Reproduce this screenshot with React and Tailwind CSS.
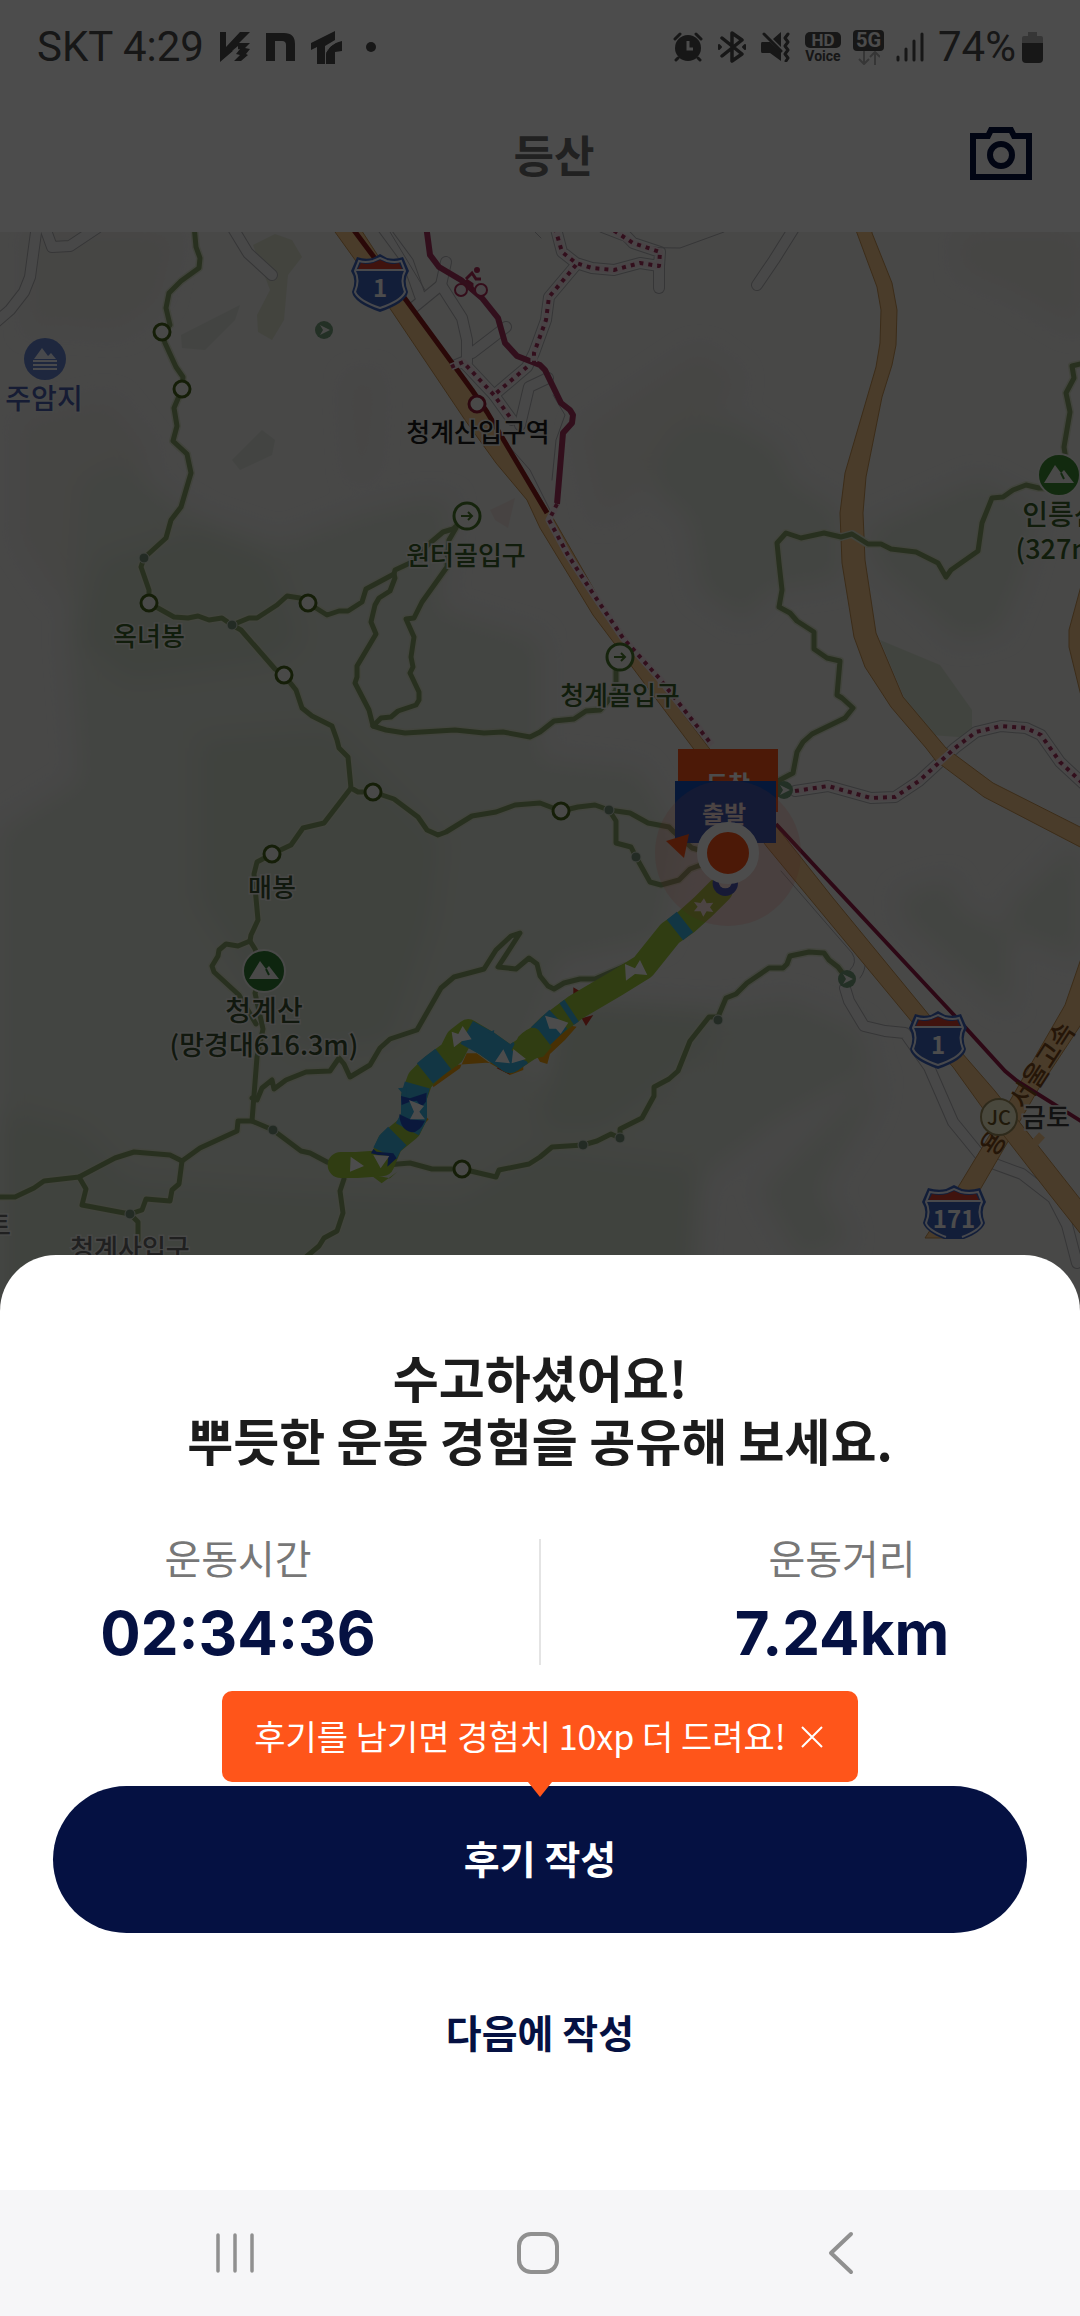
const TRAILS = [
  "194,225 196,247 200,258 199,268 181,281 169,293 166,308 170,325 162,332 165,343 176,367 183,377 182,389 174,408 177,426 173,441 187,454 191,473 181,507 171,520 166,538 144,558 141,567 149,590 149,603 174,617 188,618 198,616 209,620 222,618 232,625 249,618 257,618 277,605 287,596 300,598 308,603 327,615 339,611 348,611 362,602 366,589 394,574 395,570 410,563 430,543 443,532 453,529 467,516",
  "394,574 395,578 390,591 379,598 375,605 371,622 376,634 357,666 357,677 355,683 369,710 373,726",
  "456,528 449,540 447,567 422,602 414,618 406,619 414,637 411,657 413,667 410,673 419,692 419,700 416,705 398,711 391,717 381,718 373,726 386,730 405,733 455,730 484,733 503,732 530,737 540,732 554,721 574,719 586,711 600,710 607,702 616,690 616,670",
  "232,625 241,630 275,669 284,675 296,690 302,708 312,716 332,726 337,740 339,748 348,757 351,788 358,792 373,792 394,799 418,817 427,830 438,835 446,832 472,816 496,812 515,805 540,803 561,811 578,807 595,805 609,810 630,813 648,823 669,827 674,832 692,848 710,853",
  "609,810 616,821 616,843 631,847 636,857 650,882 661,885 679,880 690,869 698,866 715,862",
  "351,788 324,823 303,828 291,845 272,854 257,862 254,874 256,898 258,920 251,935 250,941 255,949 264,971 255,993 263,1029 257,1057 252,1121 238,1121 237,1131 200,1148 182,1161 170,1155 134,1152 115,1158 79,1177 44,1181 34,1188 15,1197 -4,1197",
  "250,941 238,946 226,944 219,950 218,956 212,966 214,972 239,995 256,1024",
  "79,1177 86,1189 82,1205 119,1212 130,1214 142,1210 146,1199 170,1201 172,1190 179,1184 182,1161",
  "130,1214 138,1222 138,1240",
  "252,1121 273,1130 301,1151 310,1153 327,1162 345,1166",
  "252,1098 257,1100 262,1088 272,1080 274,1089 286,1080 306,1072 330,1071 339,1058 344,1064 350,1077 370,1065 380,1048 390,1039 417,1030 441,988 454,977 484,969 496,950 511,936 520,933 511,947 498,967 516,969 529,958 537,964 540,976 548,986 554,989 564,983 580,979 595,979 611,972 625,966",
  "380,1166 398,1164 410,1163 432,1169 462,1169 496,1177 499,1170 529,1164 540,1157 552,1147 583,1145 597,1141 611,1134 620,1138 620,1129 642,1118 654,1096 654,1087 669,1079 678,1071 690,1041 709,1017 718,1017 726,998 736,994 747,983 769,968 783,968 787,964 790,956 809,952 824,953 829,960 838,967 847,979",
  "344,1170 344,1179 340,1191 343,1213 337,1231 324,1238 319,1246 300,1262",
  "1084,363 1072,366 1074,378 1066,393 1070,412 1064,447 1066,460",
  "1059,488 1039,488 1026,485 1013,490 1003,497 992,498 982,523 978,551 951,570 946,577 938,563 916,552 891,549 881,544 868,544 852,534 841,537 824,533 801,538 786,533 777,543 779,563 782,590 779,607 790,613 797,621 814,632 814,649 827,658 840,661 837,695 842,698 853,708 845,718 812,734 803,742 797,752 793,773 778,781",
]

const LANES = [
  "37,225 30,277 24,292 10,310 -4,322",
  "44,225 52,247 70,246 97,228",
  "231,225 248,253 272,275",
  "383,228 408,262 420,296",
  "408,312 441,285 462,318 467,340 467,362",
  "441,285 446,262",
  "472,353 506,327",
  "520,425 529,387 548,378",
  "796,225 774,260 757,285",
  "659,262 659,288",
  "555,225 562,252 576,263 592,268 614,270 640,263 659,266 660,252 633,243 616,225",
  "576,265 549,297 546,320 534,353 527,367 494,395",
  "451,367 463,362 494,395 512,420",
  "845,988 849,1001 864,1026 885,1031 905,1033 929,1067 953,1122 984,1160 1022,1174 1053,1198 1067,1225 1077,1263",
  "795,791 828,786 871,798 895,797 919,781 955,748 976,732 1001,726 1026,728 1041,735 1060,762 1090,790",
]

const DOTTED = [
  "557,504 549,520 568,555 592,592 623,638 659,678 712,745",
  "555,228 562,252 576,263 592,268 614,270 640,263 659,266 660,252 633,243 610,228",
  "576,265 549,297 546,320 534,353 534,362",
  "527,367 494,395",
  "451,367 463,362 494,395 512,420",
  "795,791 828,786 871,798 895,797 919,781 955,748 976,732 1001,726 1026,728 1041,735 1060,762 1090,790",
]

const RINGS = [[162, 332], [182, 389], [149, 603], [308, 603], [284, 675], [373, 792], [272, 854], [561, 811], [462, 1169]]
const DOTS = [[144, 558], [232, 625], [609, 810], [636, 857], [273, 1130], [130, 1214], [583, 1145], [620, 1138], [718, 1020]]
const GATES = [[324, 330], [784, 790], [847, 979]]

const LABELS = [
  { x: 44, y: 409, size: 28, fill: "#4a5fae", text: "주암지" },
  { x: 478, y: 442, size: 26, fill: "#1c1c1c", text: "청계산입구역" },
  { x: 466, y: 565, size: 26, fill: "#3a6228", text: "원터골입구" },
  { x: 149, y: 646, size: 26, fill: "#3a6228", text: "옥녀봉" },
  { x: 620, y: 705, size: 26, fill: "#3a6228", text: "청계골입구" },
  { x: 1061, y: 525, size: 28, fill: "#3a6228", text: "인릉산" },
  { x: 1061, y: 559, size: 27, fill: "#3a6228", text: "(327m)" },
  { x: 272, y: 897, size: 26, fill: "#3a5030", text: "매봉" },
  { x: 264, y: 1021, size: 28, fill: "#3a5030", text: "청계산" },
  { x: 264, y: 1055, size: 27, fill: "#3a5030", text: "(망경대616.3m)" },
  { x: 130, y: 1258, size: 26, fill: "#6b6b6b", text: "청계사입구" },
  { x: -1, y: 1235, size: 26, fill: "#6b6b6b", text: "트" },
  { x: 1046, y: 1127, size: 26, fill: "#3c3c3c", text: "금토" },
]

function Shield({ x, y, label }) {
  return (
    <g transform={`translate(${x - 29} ${y - 29})`}>
      <path d="M29 0 36 4Q44 6 52 3L58 17Q52 26 57 38 55 49 29 58 3 49 1 38 6 26 0 17L6 3Q14 6 22 4Z" fill="#3f66c0" />
      <path d="M29 4 36 7Q44 9 50 7L54 17Q49 26 54 38 50 47 29 54 8 47 4 38 9 26 4 17L8 7Q14 9 22 7Z" fill="#3f66c0" stroke="#f0f3ff" strokeWidth="2" />
      <path d="M7 15 10 9Q16 11 22 9L29 6 36 9Q42 11 48 9L51 15Z" fill="#d8402f" />
      <path d="M5 16H53" stroke="#f0f3ff" strokeWidth="2" />
      <text x="29" y="43" textAnchor="middle" fontSize="24" fontWeight="700" fill="#fff">{label}</text>
    </g>
  )
}

// three-digit route numbers use the wider shield
function WideShield({ x, y, label }) {
  return (
    <g transform={`translate(${x - 32} ${y - 28})`}>
      <path d="M32 0 40 4Q48 6 58 3L64 17Q58 26 63 38 60 47 42 54H22Q4 47 1 38 6 26 0 17L6 3Q16 6 24 4Z" fill="#3f66c0" />
      <path d="M24 52Q6 45 4 38 9 26 4 17L8 7Q17 9 25 7L32 4 39 7Q47 9 56 7L60 17Q55 26 60 38 58 45 40 52" fill="none" stroke="#f0f3ff" strokeWidth="2" />
      <path d="M7 15 10 9Q18 11 25 9L32 6 39 9Q46 11 54 9L57 15Z" fill="#d8402f" />
      <path d="M5 16H59" stroke="#f0f3ff" strokeWidth="2" />
      <text x="32" y="43" textAnchor="middle" fontSize="24" fontWeight="700" fill="#fff">{label}</text>
    </g>
  )
}

function Peak({ x, y, fill }) {
  return (
    <g transform={`translate(${x} ${y})`}>
      <circle r="21" fill={fill} stroke="#f4f4f0" strokeWidth="2" />
      <path d="M-15 8-4-10 2-2 5-5 15 8Z" fill="#f4f4f0" />
      <path d="M2-2 5 4" stroke={fill} strokeWidth="2" />
    </g>
  )
}

function TrailHead({ x, y }) {
  return (
    <g transform={`translate(${x} ${y})`} stroke="#4a7a2c" fill="none">
      <circle r="13" fill="#f4f4f0" strokeWidth="3" />
      <path d="M-6 0H5M1-4 5 0 1 4" strokeWidth="2" />
    </g>
  )
}

function Terrain() {
  return (
    <g>
      <defs>
        <filter id="relief" x="-10%" y="-10%" width="120%" height="120%">
          <feGaussianBlur stdDeviation="12" />
        </filter>
      </defs>
      <path d="M0 232H1080V1320H0Z" fill="#f0f0ee" />
      <g filter="url(#relief)">
        <g fill="#ebe9e3">
          <path d="M30 232H175L160 300 120 330 60 325 30 330Z" />
          <path d="M20 420 110 400 150 450 130 560 60 600 20 540Z" />
          <path d="M350 380 375 375 370 470 355 480Z" />
          <path d="M580 430 700 350 740 380 690 450 600 520Z" />
          <path d="M960 232H1080V330L1010 290 960 270Z" />
        </g>
        <g fill="#e0e6dc">
          <path d="M655 460 680 425 730 420 780 450 790 480 840 510 840 580 770 590 745 620 700 590 690 520 655 490Z" />
          <path d="M80 480 120 460 170 500 205 520 280 545 360 515 420 500 450 500 440 610 540 640 540 760 640 770 680 840 660 940 560 960 520 1060 560 1100 690 1080 720 1010 790 1000 860 1030 870 1070 780 1120 700 1180 650 1260 0 1320 0 830 80 780 70 640Z" />
          <path d="M865 530 980 480 1040 510 1020 580 1000 630 960 640 915 600 880 570Z" />
          <path d="M900 895 950 880 960 910 1080 960 1080 840 1010 905 1010 1010 950 960 905 920Z" />
          <path d="M820 1130 860 1090 878 1075 870 1110 820 1190 850 1240 800 1260 760 1190Z" />
        </g>
        <g fill="#d6dfd0">
          <path d="M100 560 200 530 270 560 300 640 270 660 130 680 80 640Z" />
          <path d="M200 740 330 730 440 840 430 920 390 1040 300 1050 200 900Z" />
          <path d="M0 1110 80 1130 130 1180 260 1190 460 1200 540 1150 700 1170 690 1320H0Z" />
          <path d="M560 1000 720 1010 700 1060 600 1130 540 1130Z" />
        </g>
      </g>
      <path d="M253 245 275 234 292 240 302 257 288 275 284 320 272 340 258 332 257 315 270 290Z" fill="#e0e4d0" />
      <g fill="#e0e5dc">
        <path d="M181 335 240 305 235 320 205 350 182 348Z" />
        <path d="M232 460 262 430 275 440 272 455 240 470Z" />
      </g>
      <path d="M880 640 940 665 972 710 972 738 930 735 905 700Z" fill="#dbe5d3" />
      <path d="M490 510 515 498 508 528 495 520Z" fill="#eee2dc" />
    </g>
  )
}

function Route() {
  return (
    <g transform="translate(310 850) scale(0.3333)">
      <g fill="#f0a010">
        <path d="M370 712 450 655 470 610 500 610 540 640 600 675 640 660 640 630 360 650Z" />
        <path d="M690 635 712 642 720 612 765 570 800 530 740 520 670 600Z" />
        <path d="M335 790 356 808 335 830Z" />
      </g>
      <path d="M790 412 820 430 790 440ZM850 495 828 528 815 505ZM560 655 600 674 580 640Z" fill="#c8382a" />
      <g fill="none" strokeWidth="78" strokeLinejoin="round">
        <path d="M92 945H140L215 940 240 880 295 835 312 800V740L330 690 370 650 425 610 445 570 475 547 530 580 600 630 660 590 720 530 800 470 920 400 1000 350 1080 250 1130 215 1180 170 1230 120" stroke="#a0cc3c" strokeLinecap="round" />
        <g stroke="#3cb4e4">
          <path d="M225 910 240 880 262 858M292 838 312 800V740L322 705M345 670 370 650 400 627M470 547 530 580 600 630 632 608M690 560 745 508M770 492 785 482M1095 240 1125 216" />
        </g>
      </g>
      <path d="M415 560 470 600 440 650 400 600Z" fill="#a0cc3c" />
      <path d="M264 715 290 712 290 745ZM535 548 553 540 550 555Z" fill="#3cb4e4" />
      <path d="M625 560Q670 515 690 545L725 590 700 620 645 632 605 600Z" fill="#a0cc3c" />
      <g fill="#2252c8">
        <path d="M273 738 300 745 350 728 348 755 335 770 320 752 300 755 275 765Z" />
        <path d="M268 793 300 808 345 812Q330 846 305 847 270 840 268 793Z" />
        <path d="M183 910 190 897 200 905 250 910 260 925 232 950 235 918 205 915Z" />
        <circle cx="1246" cy="100" r="38" />
      </g>
      <path d="M175 970 215 1000 262 965 240 985 190 975Z" fill="#a0cc3c" />
      <g fill="#fff">
        <path d="M122 920 162 948 120 965ZM190 915 238 918 212 955ZM297 750 342 768 328 785 345 808H300L312 785Z" />
        <path d="M425 545 445 552 458 528 485 568 455 574 432 592ZM580 598 600 640 555 635ZM610 597 648 627 605 640Z" />
        <path d="M705 497 745 508 775 518 752 552 738 536 718 536ZM945 342 975 355 990 330 1012 375 975 372 948 392Z" />
        <path d="M1182 145 1190 160 1210 158 1200 172 1210 186 1190 184 1180 200 1172 184 1152 184 1163 170 1152 156 1172 159Z" />
        <circle cx="1246" cy="95" r="20" />
      </g>
    </g>
  )
}

function TrailMap() {
  return (
    <svg
      viewBox="0 232 1080 1083"
      preserveAspectRatio="xMidYMin slice"
      className="block h-[1083px] w-full grow font-['Noto_Sans_CJK_KR',sans-serif]"
      role="img"
      aria-label="등산 경로 지도"
    >
      <Terrain />

      <g fill="none" strokeLinejoin="round" strokeLinecap="round">
        {LANES.map((d) => <polyline key={d} points={d} stroke="#b4b4b8" strokeWidth="12" />)}
        {LANES.map((d) => <polyline key={d} points={d} stroke="#f2f2f0" strokeWidth="10" />)}
        <path d="M781 871 852 953Q858 962 850 970M860 978Q866 970 865 962M600 232Q640 250 680 248L724 232M553 395 565 415 556 440 552 480M535 232 541 238M390 232 425 290M398 320 530 470 550 510" stroke="#b4b4b8" strokeWidth="1" />
      </g>

      <g fill="#f7c88c" stroke="#c89452" strokeWidth="1">
        <path d="M854 225 877 287 881 310 880 343 876 367 845 473 840 513 842 563 854 637 865 667 891 707 926 748 936 761 984 797 1084 849V829L993 783 958 757 946 748 903 697 876 633 865 560 863 513 866 477 882 397 892 365 896 345 897 310 892 283 872 233V225Z" />
        <path d="M1084 575 1069 630V647L1084 708Z" />
        <path d="M1084 950 1065 1005 1000 1118 960 1184 925 1238H953L981 1188 1039 1088 1084 1020Z" />
        <path d="M330 225 389 307 465 420 496 463 527 500 540 528 593 615 693 748 767 847 912 1022 953 1067 984 1110 1050 1195 1084 1238V1204L995 1091 929 1015 833 898 776 826 709 748 632 646 600 600 553 518 487 413 410 305 358 225Z" />
        <path d="M1010 1128 1030 1148 1042 1135" fill="none" stroke="#f7c88c" strokeWidth="8" />
      </g>

      <g fill="none" strokeLinejoin="round">
        <path d="M350 225 406 300 472 390 487 412 547 513" stroke="#8c1c1c" strokeWidth="5" />
        <path d="M776 824 826 878 953 1014 1005 1071 1017 1081 1084 1123" stroke="#981c48" strokeWidth="4" />
        <polyline points="426,225 430,255 439,267 461,280 482,298 498,318 505,343 517,356 540,365 545,370 561,403 570,410 573,415 572,423 563,433 557,504" stroke="#a83460" strokeWidth="6" />
        {DOTTED.map((d) => <polyline key={d} points={d} stroke="#f6e4ec" strokeWidth="7" />)}
        {DOTTED.map((d) => <polyline key={d} points={d} stroke="#a83460" strokeWidth="4" strokeDasharray="4 5" />)}
      </g>

      <g fill="none" strokeLinejoin="round" strokeLinecap="round">
        {TRAILS.map((d) => <polyline key={d} points={d} stroke="#dce4cc" strokeWidth="8" />)}
        {TRAILS.map((d) => <polyline key={d} points={d} stroke="#88a06a" strokeWidth="5" />)}
      </g>

      {RINGS.map(([x, y]) => <circle key={`${x}-${y}`} cx={x} cy={y} r="8" fill="#f4f4f0" stroke="#46661c" strokeWidth="3" />)}
      {DOTS.map(([x, y]) => <circle key={`${x}-${y}`} cx={x} cy={y} r="5" fill="#76927a" stroke="#d8e0d4" strokeWidth="1" />)}
      {GATES.map(([x, y]) => (
        <g key={`${x}-${y}`} transform={`translate(${x} ${y})`}>
          <circle r="9" fill="#76a07c" />
          <path d="M-4-5 6 0-4 5-1 0Z" fill="#f4f4f0" />
        </g>
      ))}
      <circle cx="477" cy="404" r="8" fill="#f4f4f0" stroke="#981c38" strokeWidth="3" />

      <g transform="translate(471 280)" fill="none" stroke="#b02c58" strokeWidth="2">
        <circle cx="-10" cy="10" r="6" fill="#f2e4ea" />
        <circle cx="10" cy="10" r="6" fill="#f2e4ea" />
        <path d="M-5-1 1-7 5-1 10-1M-5 0 1 4V12" strokeWidth="3" />
        <circle cx="6" cy="-10" r="2" fill="#b02c58" />
      </g>

      <Shield x={380} y={283} label="1" />
      <Shield x={938} y={1040} label="1" />
      <WideShield x={954} y={1213} label="171" />

      <g transform="translate(45 359)">
        <circle r="21" fill="#6684d0" />
        <path d="M-11 0-3-11 3-3 6-6 11 0Z" fill="#f0f3ff" />
        <path d="M-12 2H12M-12 6H12M-12 10H12" stroke="#f0f3ff" strokeWidth="2" />
      </g>
      <Peak x={1059} y={475} fill="#3f8c34" />
      <Peak x={264} y={971} fill="#2f7c34" />
      <TrailHead x={467} y={516} />
      <TrailHead x={620} y={657} />

      <g fontWeight="500" textAnchor="middle">
        <text transform="translate(1050 1070) rotate(-57)" fontSize="26" fill="#7c4a1c">서울고속</text>
        <text transform="translate(1001 1148) rotate(-57)" fontSize="26" fill="#7c4a1c">용</text>
        {LABELS.map((l) => (
          <text key={l.text} x={l.x} y={l.y} fontSize={l.size} fill={l.fill} stroke="#f0f2ee" strokeWidth="3" paintOrder="stroke">{l.text}</text>
        ))}
      </g>
      <circle cx="999" cy="1117" r="18" fill="#f4f0cc" stroke="#9c8c5c" strokeWidth="2" />
      <text x="999" y="1125" textAnchor="middle" fontSize="20" fontWeight="500" fill="#6c5424">JC</text>

      <Route />

      {/* start / finish flags and the current position */}
      <g textAnchor="middle" fontSize="24" fontWeight="700" fill="#fff">
        <path d="M678 749H778V812H678Z" fill="#ff5519" />
        <text x="728" y="793">도착</text>
        <path d="M675 781H776V843H675Z" fill="#1450c0" />
        <text x="724" y="823">출발</text>
      </g>
      <circle cx="728" cy="853" r="73" fill="#ff7a6a" fillOpacity="0.2" />
      <path d="M666 841 689 834 684 858Z" fill="#ff5519" />
      <circle cx="728" cy="853" r="26" fill="#ff5519" stroke="#fff" strokeWidth="10" />
    </svg>
  )
}

function StatusBar() {
  return (
    <div className="flex h-[94px] items-center justify-between px-[37px] font-[Roboto,sans-serif] text-[42px] leading-none text-[#4d4d4d]">
      <div className="flex items-center">
        <span className="mr-4">SKT 4:29</span>
        <svg className="mr-4 h-[30px] w-[30px]" viewBox="0 0 30 30" fill="currentColor">
          <path d="M0 0H6V15L20 0H30L19 11H30L25 16 30 17 26 22 28 23 21 29H14L20 23 16 22 20 17 14 18 0 30Z" />
          <path d="M12 19 18 14 18 18Z" fill="#fff" />
        </svg>
        <svg className="mr-4 h-7 w-[29px]" viewBox="0 0 29 28" fill="currentColor">
          <path d="M0 0H18Q29 0 29 11V28H20V12Q20 8 16 8H9V28H0Z" />
        </svg>
        <svg className="mr-6 h-[33px] w-[31px]" viewBox="0 0 31 33" fill="currentColor">
          <path d="M0 12 24 0V9L14 15V33H6V16L0 19Z" />
          <path d="M31 10V20L24 21V33H15V23Q16 14 31 10Z" />
          <path d="M14.500 15V33M15 21Q18 15 25 11" fill="none" stroke="#fff" strokeWidth="1" />
        </svg>
        <span className="h-2.5 w-2.5 rounded-full bg-current" />
      </div>

      <div className="flex items-center">
        <svg className="mr-3.5 h-[30px] w-[30px]" viewBox="0 0 30 30" fill="none" stroke="currentColor" strokeWidth="4" strokeLinecap="round">
          <circle cx="15" cy="16" r="13" fill="currentColor" stroke="none" />
          <path d="M2 7 7 2M28 7 23 2M5 26 3 28M25 26 27 28" strokeWidth="3" />
          <path d="M15 9V17H20" stroke="#fff" strokeWidth="3" strokeLinecap="butt" />
        </svg>
        <svg className="mr-3.5 h-[32px] w-[30px]" viewBox="0 0 30 32" fill="none" stroke="currentColor" strokeWidth="3.500" strokeLinejoin="round" strokeLinecap="round">
          <path d="M5 7 25 23 15 30V2L25 9 5 25" />
          <path d="M2 14 4 16 2 18ZM28 14 26 16 28 18Z" fill="currentColor" strokeWidth="2" />
        </svg>
        <svg className="mr-3.5 h-[30px] w-[30px]" viewBox="0 0 30 30" fill="currentColor">
          <path d="M1 10H9L20 20V29L9 21H1Q0 21 0 19V12Q0 10 1 10ZM12 7 20 0V15Z" />
          <path d="M3 2 20 19M27 2 24 6 27 10 24 14 27 18 24 22 27 26 25 29" fill="none" stroke="currentColor" strokeWidth="3" strokeLinecap="round" strokeLinejoin="round" />
        </svg>
        <div className="mr-3 flex w-9 flex-col items-center gap-0.5 font-bold">
          <span className="w-full rounded-[5px] bg-[#4d4d4d] text-center text-[17px] leading-4 text-white">HD</span>
          <span className="text-[14px] leading-3">Voice</span>
        </div>
        <div className="mr-3 flex w-[31px] flex-col items-center font-bold">
          <span className="w-full rounded-[4px] bg-[#4d4d4d] text-center text-[20px] leading-[21px] text-white">5G</span>
          <svg className="h-3.5 w-[22px]" viewBox="0 0 22 14" fill="none" stroke="#b4b4b4" strokeWidth="2">
            <path d="M6 0V12M1 8 6 13 11 8M17 14V2M12 6 17 1 22 6" />
          </svg>
        </div>
        <svg className="mr-3.5 h-[30px] w-7" viewBox="0 0 28 30" fill="none" stroke="currentColor" strokeWidth="3" strokeLinecap="round">
          <path d="M2 25V28M10 17V28M18 9V28M26 2V28" />
        </svg>
        <span>74%</span>
        <svg className="ml-1.5 h-[31px] w-[21px]" viewBox="0 0 21 31">
          <path d="M6 0H15V4H19Q21 4 21 6V12H0V6Q0 4 2 4H6Z" fill="#b4b4b4" />
          <path d="M0 11H21V27Q21 31 17 31H4Q0 31 0 27Z" fill="currentColor" />
        </svg>
      </div>
    </div>
  )
}

function Header() {
  return (
    <header className="mb-[18px] grid h-[120px] grid-cols-3 items-center pr-12 pl-[76px]">
      <h1 className="col-start-2 text-center text-[44px] leading-none font-bold text-[#707070]">등산</h1>
      <button type="button" aria-label="카메라" className="mb-0.5 justify-self-end">
        <svg className="h-[53px] w-[62px]" viewBox="0 0 62 53" fill="none" stroke="#051142" strokeWidth="6">
          <path d="M3 9H18L21 3H41L44 9H59V50H3Z" />
          <circle cx="31" cy="28" r="11" />
        </svg>
      </button>
    </header>
  )
}

function Stat({ label, value }) {
  return (
    <div className="flex-1 text-center">
      <dt className="text-[40px] leading-9 text-[#777]">{label}</dt>
      <dd className="mt-[26px] font-[Inter,sans-serif] text-[60px] leading-[64px] font-bold text-[#051142]">{value}</dd>
    </div>
  )
}

function FinishSheet() {
  return (
    <section className="relative -mt-[60px] flex flex-col items-center rounded-t-[56px] bg-white px-[53px] pt-[90px] pb-[119px]">
      <h2 className="text-center text-[50px] leading-[63px] font-bold text-[#1c1c1c]">
        수고하셨어요!
        <br />
        뿌듯한 운동 경험을 공유해 보세요.
      </h2>

      <dl className="mt-[68px] flex w-full">
        <Stat label="운동시간" value="02:34:36" />
        <div className="mx-[116px] w-[2px] bg-[#e4e4e4]" />
        <Stat label="운동거리" value="7.24km" />
      </dl>

      <div className="relative z-10 mt-[26px] flex h-[91px] items-center gap-3.5 rounded-[10px] bg-[#ff551a] pr-[34px] pl-8 text-[34px] text-white">
        <span className="pb-0.5">후기를 남기면 경험치 10xp 더 드려요!</span>
        <button type="button" aria-label="닫기">
          <svg className="h-6 w-6" viewBox="0 0 24 24" fill="none" stroke="currentColor" strokeWidth="2">
            <path d="M2 2 22 22M22 2 2 22" />
          </svg>
        </button>
        <svg className="absolute top-full left-1/2 h-[15px] w-6 -translate-x-1/2" viewBox="0 0 24 15" fill="#ff551a">
          <path d="M0 0H24L12 15Z" />
        </svg>
      </div>

      <button type="button" className="mt-1 h-[147px] w-full rounded-full bg-[#051142] pb-1 text-[39px] font-bold text-white">
        후기 작성
      </button>
      <button type="button" className="mt-[58px] h-20 px-8 text-[39px] font-bold text-[#051142]">
        다음에 작성
      </button>
    </section>
  )
}

function NavBar() {
  return (
    <nav className="grid h-[126px] grid-cols-3 items-center justify-items-center bg-[#f6f6f8] pr-[88px] pl-[84px] text-[#909090]">
      <button type="button" aria-label="최근 앱">
        <svg className="h-11 w-11" viewBox="0 0 44 44" fill="none" stroke="currentColor" strokeWidth="3.500" strokeLinecap="round">
          <path d="M5 4V40M22 4V40M39 4V40" />
        </svg>
      </button>
      <button type="button" aria-label="홈">
        <svg className="h-11 w-11" viewBox="0 0 44 44" fill="none" stroke="currentColor" strokeWidth="4">
          <rect x="3" y="3" width="38" height="38" rx="12" />
        </svg>
      </button>
      <button type="button" aria-label="뒤로">
        <svg className="h-11 w-11" viewBox="0 0 44 44" fill="none" stroke="currentColor" strokeWidth="4" strokeLinecap="round" strokeLinejoin="round">
          <path d="M32 3 12 22 32 41" />
        </svg>
      </button>
    </nav>
  )
}

export default function App() {
  return (
    <div className="flex min-h-screen flex-col bg-white font-['Noto_Sans_CJK_KR',sans-serif]">
      <div className="relative flex grow flex-col">
        <StatusBar />
        <Header />
        <TrailMap />
        <div className="absolute inset-0 bg-black/70" />
      </div>
      <FinishSheet />
      <NavBar />
    </div>
  )
}
